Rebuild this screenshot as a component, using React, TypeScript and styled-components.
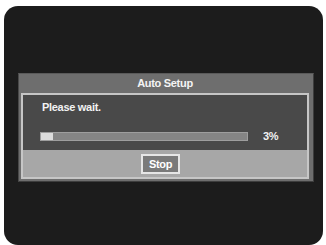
import React from "react";
import styled, { createGlobalStyle } from "styled-components";

const Global = createGlobalStyle`
  html, body { margin: 0; padding: 0; background: #ffffff; }
  body { font-family: "Liberation Sans", Arial, sans-serif; }
  * { box-sizing: border-box; }
`;

const Screen = styled.div`
  margin: 6px 3px 0 4px;
  height: 239px;
  border-radius: 14px;
  background: #1c1c1c;
  padding: 67px 0 0 14px;
`;

const Dialog = styled.div`
  width: 296px;
  height: 109px;
  background: #6e6e6e;
  border: 1px solid #3e3e3e;
  border-top-color: #5a5a5a;
  border-left-color: #4a4a4a;
  padding: 0 4px 2px 2px;
  display: flex;
  flex-direction: column;
`;

const Title = styled.div`
  height: 19px;
  line-height: 19px;
  text-align: center;
  color: #f4f4f4;
  font-weight: bold;
  font-size: 11px;
  letter-spacing: -0.3px;
`;

const Content = styled.div`
  flex: 1;
  border: 2px solid #c6c6c6;
  display: flex;
  flex-direction: column;
`;

const Panel = styled.div`
  height: 55px;
  background: #494949;
  padding: 6px 0 8px 17px;
  display: flex;
  flex-direction: column;
`;

const Message = styled.div`
  color: #f2f2f2;
  font-weight: bold;
  font-size: 11px;
  letter-spacing: -0.3px;
  line-height: 12px;
  padding-left: 2px;
`;

const ProgressRow = styled.div`
  margin-top: auto;
  display: flex;
  align-items: center;
`;

const Track = styled.div`
  width: 208px;
  height: 9px;
  background: #858585;
  border: 1px solid #9e9e9e;
  display: flex;
`;

const Fill = styled.div`
  height: 100%;
  background: #dcdcdc;
`;

const Percent = styled.div`
  margin-left: 15px;
  color: #f2f2f2;
  font-weight: bold;
  font-size: 11px;
  letter-spacing: -0.3px;
  line-height: 12px;
`;

const ButtonArea = styled.div`
  flex: 1;
  background: #a7a7a7;
  display: flex;
  align-items: center;
  padding-left: 118px;
`;

const StopButton = styled.div`
  width: 39px;
  height: 20px;
  border: 2px solid #e6e6e6;
  background: #7a7a7a;
  color: #ffffff;
  font-weight: bold;
  font-size: 11px;
  letter-spacing: -0.3px;
  display: flex;
  align-items: center;
  justify-content: center;
`;

export default function App() {
  const progress = 3;
  return (
    <>
      <Global />
      <Screen>
        <Dialog>
          <Title>Auto Setup</Title>
          <Content>
            <Panel>
              <Message>Please wait.</Message>
              <ProgressRow>
                <Track>
                  <Fill style={{ width: `${(12 / 206) * 100}%` }} />
                </Track>
                <Percent>{progress}%</Percent>
              </ProgressRow>
            </Panel>
            <ButtonArea>
              <StopButton>Stop</StopButton>
            </ButtonArea>
          </Content>
        </Dialog>
      </Screen>
    </>
  );
}
